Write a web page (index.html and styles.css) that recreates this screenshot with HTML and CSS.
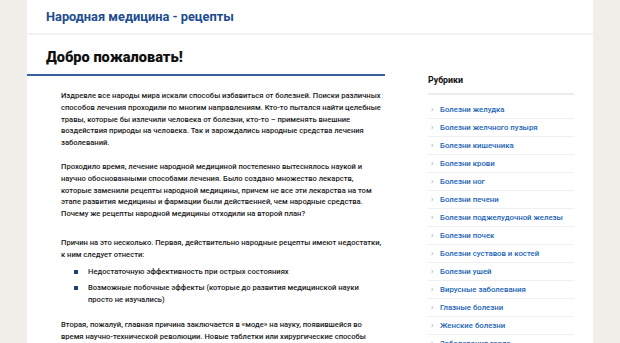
FILE: index.html
```html
<!DOCTYPE html>
<html lang="ru">
<head>
<meta charset="utf-8">
<link rel="stylesheet" href="styles.css">
</head>
<body>
<div class="page">
  <header class="site-header">
    <div class="site-title">Народная медицина - рецепты</div>
  </header>
  <div class="layout">
    <main class="main">
      <h1 class="page-title">Добро пожаловать!</h1>
      <div class="content">
        <p>Издревле все народы мира искали способы избавиться от болезней. Поиски различных способов лечения проходили по многим направлениям. Кто-то пытался найти целебные травы, которые бы излечили человека от болезни, кто-то – применять внешние воздействия природы на человека. Так и зарождались народные средства лечения заболеваний.</p>
        <p class="wide">Проходило время, лечение народной медициной постепенно вытеснялось наукой и научно обоснованными способами лечения. Было создано множество лекарств, которые заменили рецепты народной медицины, причем не все эти лекарства на том этапе развития медицины и фармации были действенней, чем народные средства. Почему же рецепты народной медицины отходили на второй план?</p>
        <p class="lead">Причин на это несколько. Первая, действительно народные рецепты имеют недостатки, к ним следует отнести:</p>
        <ul class="list">
          <li>Недостаточную эффективность при острых состояниях</li>
          <li>Возможные побочные эффекты (которые до развития медицинской науки просто не изучались)</li>
        </ul>
        <p>Вторая, пожалуй, главная причина заключается в «моде» на науку, появившейся во время научно-технической революции. Новые таблетки или хирургические способы лечения казались людям более надежными.</p>
      </div>
    </main>
    <aside class="sidebar">
      <div class="widget-title">Рубрики</div>
      <ul class="cats">
        <li><a href="#">Болезни желудка</a></li>
        <li><a href="#">Болезни желчного пузыря</a></li>
        <li><a href="#">Болезни кишечника</a></li>
        <li><a href="#">Болезни крови</a></li>
        <li><a href="#">Болезни ног</a></li>
        <li><a href="#">Болезни печени</a></li>
        <li><a href="#">Болезни поджелудочной железы</a></li>
        <li><a href="#">Болезни почек</a></li>
        <li><a href="#">Болезни суставов и костей</a></li>
        <li><a href="#">Болезни ушей</a></li>
        <li><a href="#">Вирусные заболевания</a></li>
        <li><a href="#">Глазные болезни</a></li>
        <li><a href="#">Женские болезни</a></li>
        <li><a href="#">Заболевания горла</a></li>
        <li><a href="#">Кожные болезни</a></li>
      </ul>
    </aside>
  </div>
</div>
</body>
</html>
```
FILE: styles.css
```css
html, body {
  margin: 0;
  padding: 0;
  background: #f0eee9;
  font-family: Roboto, "Liberation Sans", sans-serif;
  color: #222;
  overflow: hidden;
  height: 343px;
}
.page {
  width: 566px;
  margin-left: 27px;
  background: #fff;
  min-height: 343px;
}
.site-header {
  height: 33px;
  border-bottom: 2px solid #f1f1f1;
  padding-left: 19px;
  display: flex;
  align-items: center;
}
.site-title {
  font-size: 12.8px;
  font-weight: 700;
  color: #1d4c8f;
}
.layout {
  display: flex;
  padding-right: 19px;
}
.main {
  width: 358px;
  flex: none;
}
.page-title {
  margin: 0;
  font-size: 14.6px;
  font-weight: 900;
  color: #111;
  padding: 13px 0 7px 19px;
  line-height: 19px;
  border-bottom: 2px solid #3d5e9c;
}
.content {
  padding: 14px 0 0 34px;
  font-size: 7.6px;
  font-weight: 500;
  line-height: 11.8px;
  color: #1a1a1a;
}
.content p {
  margin: 0 0 12px;
}
.content p.wide {
  margin-bottom: 17px;
}
.content p.lead {
  margin-bottom: 5px;
}
.list {
  list-style: none;
  margin: 0 0 13px;
  padding: 0 0 0 27px;
}
.list li {
  position: relative;
  margin-bottom: 5px;
}
.list li::before {
  content: "";
  position: absolute;
  left: -14px;
  top: 4px;
  width: 4px;
  height: 4px;
  background: #1d3f85;
}
.sidebar {
  margin-left: 43px;
  flex: 1;
  padding-top: 39px;
}
.widget-title {
  font-size: 8.8px;
  font-weight: 700;
  color: #111;
  line-height: 12px;
  padding-bottom: 7px;
  border-bottom: 2px solid #ececec;
}
.cats {
  list-style: none;
  margin: 6px 0 0;
  padding: 0;
}
.cats li {
  height: 17px;
  border-bottom: 1px solid #f0f0f0;
  display: flex;
  align-items: center;
  font-size: 7.8px;
  font-weight: 500;
}
.cats li::before {
  content: "›";
  color: #aaa;
  width: 9px;
  padding-left: 3px;
  font-size: 8px;
}
.cats a {
  color: #2163b5;
  text-decoration: none;
}
```
